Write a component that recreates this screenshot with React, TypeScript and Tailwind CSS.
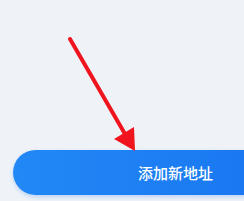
export default function App() {
  return (
    <div className="relative w-[244px] h-[201px] overflow-hidden bg-[#eff3f8]" style={{ fontFamily: '"Noto Sans CJK SC", "Noto Sans", sans-serif' }}>
      <div className="pt-[150px] pl-[13px]">
        <div className="flex h-[45px] w-[300px] items-center rounded-l-full bg-gradient-to-r from-[#2288f6] to-[#1874f0] pl-[125px] shadow-[0_2px_4px_rgba(30,110,230,0.25)]">
          <span className="text-[15px] font-medium leading-none text-white">添加新地址</span>
        </div>
      </div>
      <svg className="absolute left-0 top-0" width="244" height="201" viewBox="0 0 244 201">
        <line x1="70" y1="39" x2="125" y2="134" stroke="#f0141e" strokeWidth="4" strokeLinecap="round" />
        <polygon points="135,151 114,139 134,127" fill="#f0141e" />
      </svg>
    </div>
  );
}
